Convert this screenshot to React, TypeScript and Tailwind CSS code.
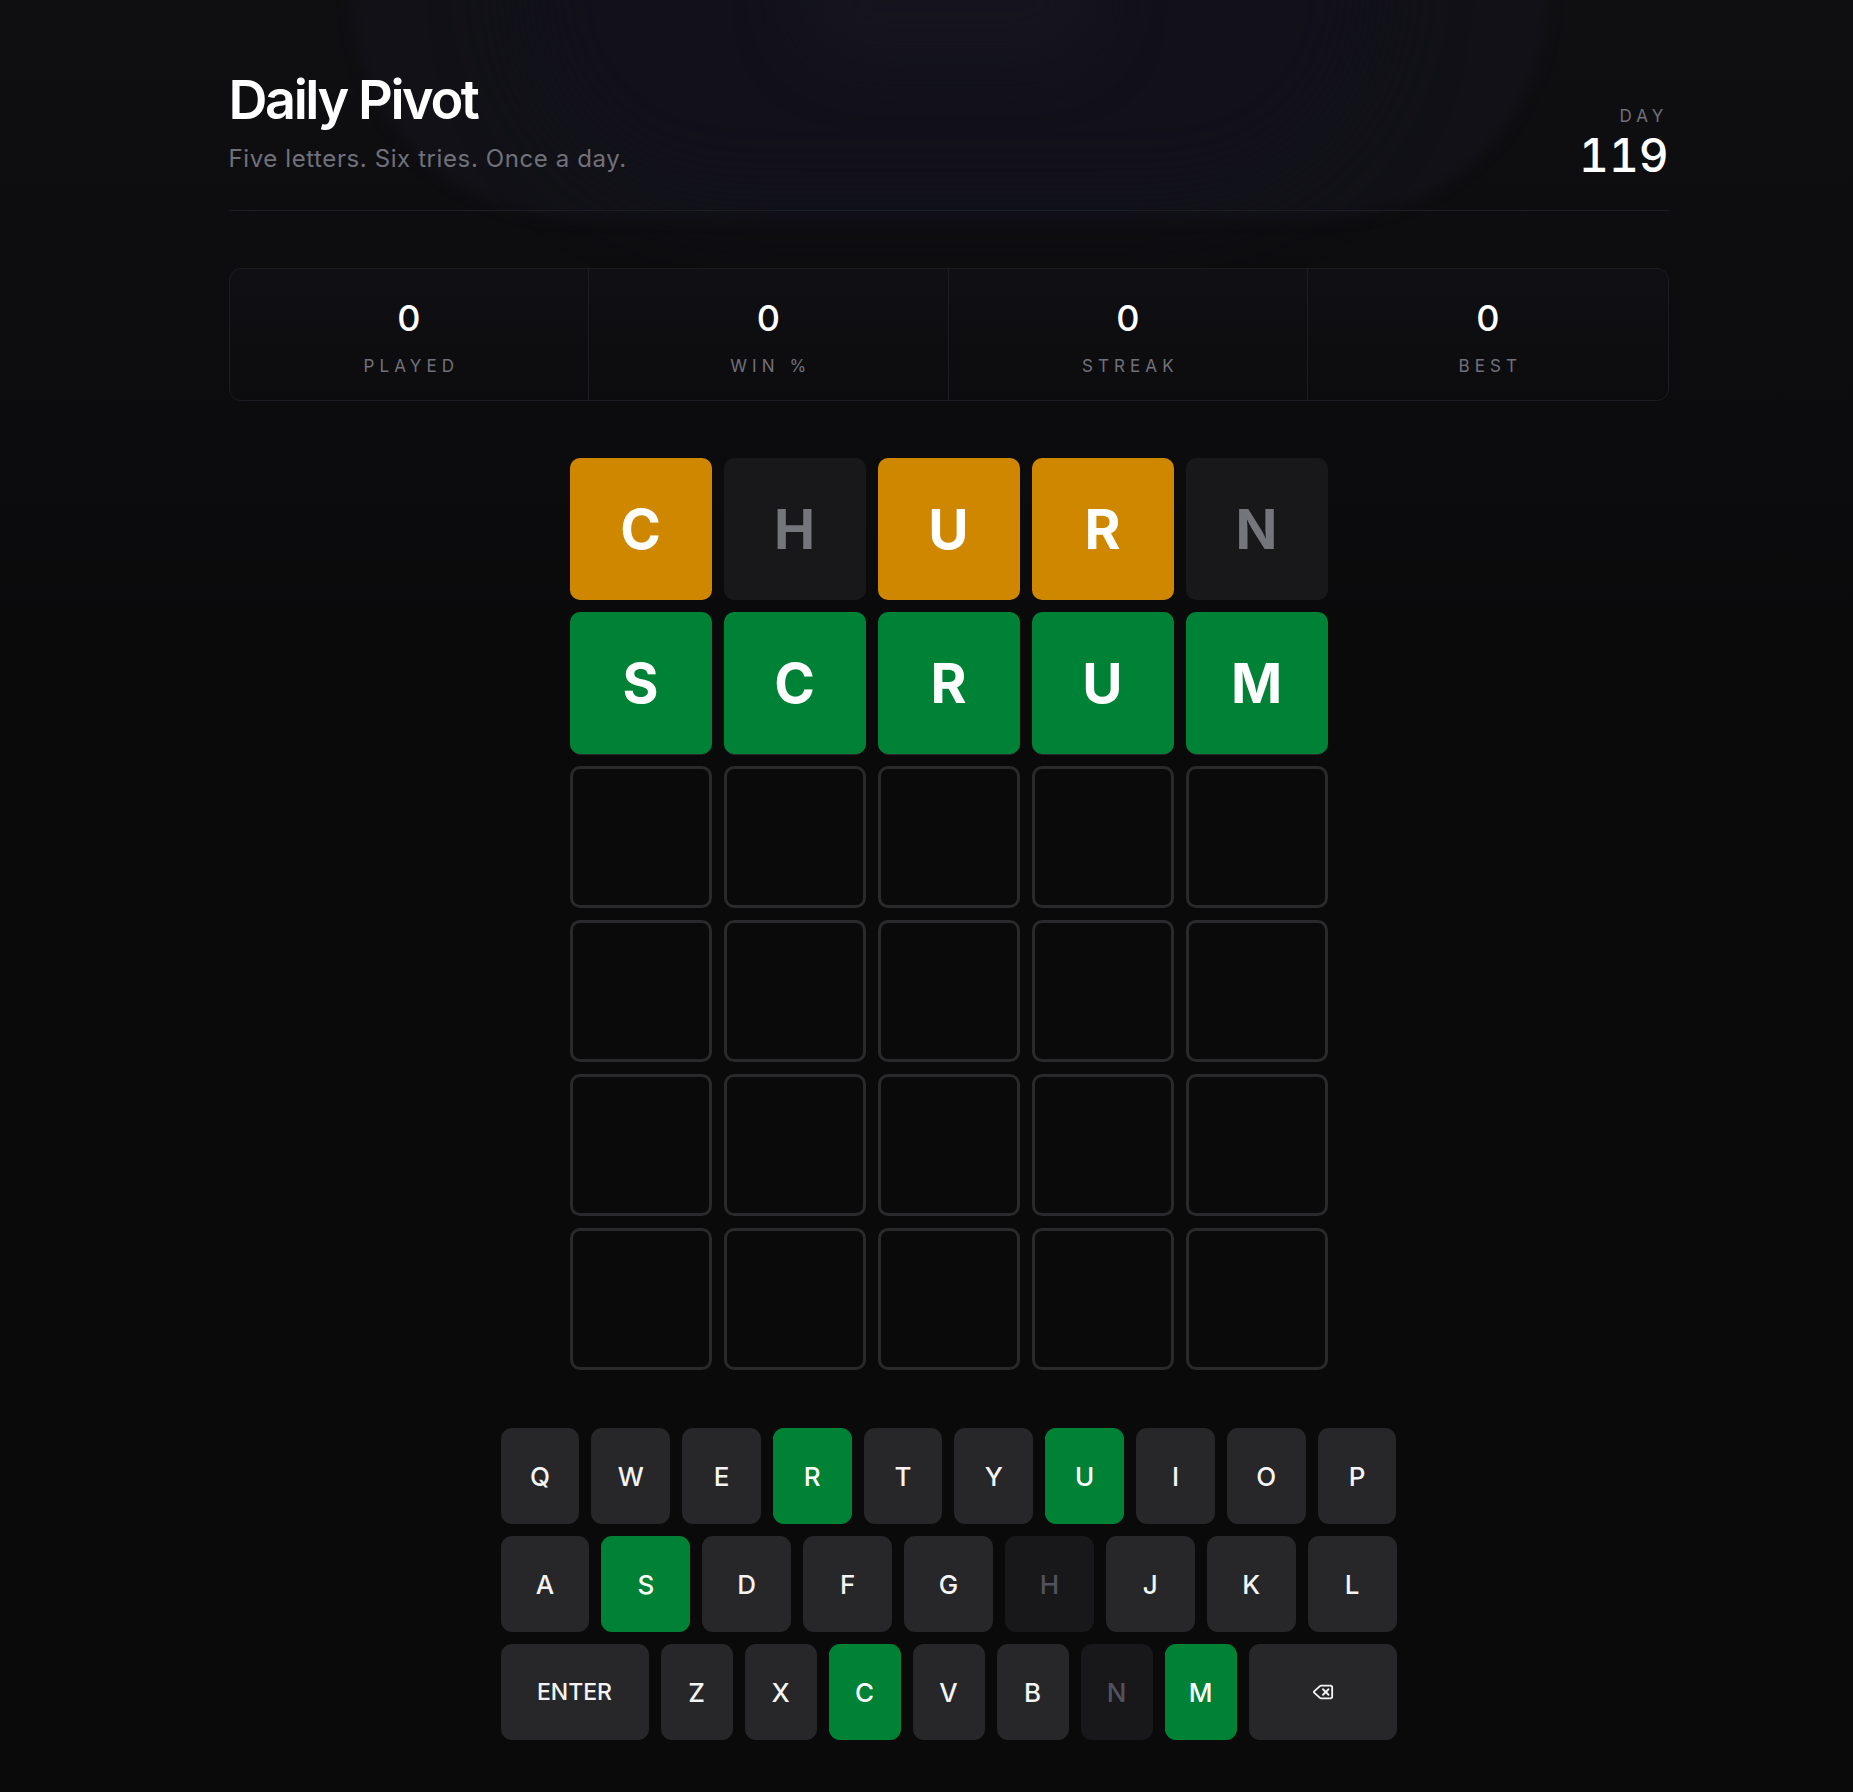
import { Delete } from "lucide-react";

type Mark = "correct" | "present" | "absent" | "empty";

type Cell = { letter: string; mark: Mark };

const guesses: Cell[][] = [
  [
    { letter: "C", mark: "present" },
    { letter: "H", mark: "absent" },
    { letter: "U", mark: "present" },
    { letter: "R", mark: "present" },
    { letter: "N", mark: "absent" },
  ],
  [
    { letter: "S", mark: "correct" },
    { letter: "C", mark: "correct" },
    { letter: "R", mark: "correct" },
    { letter: "U", mark: "correct" },
    { letter: "M", mark: "correct" },
  ],
];

const board: Cell[][] = Array.from({ length: 6 }, (_, r) =>
  guesses[r] ?? Array.from({ length: 5 }, () => ({ letter: "", mark: "empty" as Mark })),
);

const keyMarks: Record<string, Mark> = {
  R: "correct",
  U: "correct",
  S: "correct",
  C: "correct",
  M: "correct",
  H: "absent",
  N: "absent",
};

const keyRows = [
  ["Q", "W", "E", "R", "T", "Y", "U", "I", "O", "P"],
  ["A", "S", "D", "F", "G", "H", "J", "K", "L"],
  ["ENTER", "Z", "X", "C", "V", "B", "N", "M", "BACK"],
];

const stats = [
  { value: 0, label: "Played" },
  { value: 0, label: "Win %" },
  { value: 0, label: "Streak" },
  { value: 0, label: "Best" },
];

const tileStyles: Record<Mark, string> = {
  correct: "bg-green-700 text-white shadow-[0_4px_0_-3px_#2a2a2e]",
  present: "bg-yellow-600 text-white",
  absent: "bg-zinc-900 text-[#74767b]",
  empty: "border-[3px] border-[#2a2a2d] bg-transparent",
};

const keyStyles: Record<Mark, string> = {
  correct: "bg-green-700 text-white",
  present: "bg-yellow-600 text-white",
  absent: "bg-zinc-900 text-zinc-600",
  empty: "bg-zinc-800 text-zinc-100",
};

function Tile({ cell }: { cell: Cell }) {
  return (
    <div
      className={`flex h-[142px] w-[142px] items-center justify-center rounded-[10px] text-[55px] font-bold leading-none ${tileStyles[cell.mark]}`}
    >
      {cell.letter}
    </div>
  );
}

function Key({ label }: { label: string }) {
  const wide = label === "ENTER" || label === "BACK";
  const mark = keyMarks[label] ?? "empty";
  return (
    <button
      type="button"
      className={`flex h-[96px] items-center justify-center rounded-[11px] font-medium ${
        wide ? "w-[148px] shrink-0 text-[23px]" : "flex-1 text-[26px]"
      } ${keyStyles[mark]}`}
    >
      {label === "BACK" ? <Delete size={22} strokeWidth={2} /> : label}
    </button>
  );
}

export default function App() {
  return (
    <div className="relative min-h-screen overflow-hidden bg-[#0a0a0b] font-[Inter,sans-serif] text-zinc-100">
      <div className="pointer-events-none absolute inset-x-0 top-0 h-[700px] bg-gradient-to-b from-[#0f0f12] to-transparent" />
      <div className="pointer-events-none absolute left-[350px] top-[-230px] h-[450px] w-[1200px] rounded-full bg-[#111117] blur-[6px]" />
      <div className="pointer-events-none absolute left-[520px] top-[-220px] h-[420px] w-[860px] rounded-full bg-[#12111a] blur-[40px]" />
      <div className="pointer-events-none absolute left-[800px] top-[-60px] h-[120px] w-[300px] rounded-full bg-[#16151e] blur-[30px]" />

      <div className="relative pl-[44px]">
        <div className="mx-auto w-[1440px] pt-[73px]">
          <header className="flex items-end justify-between border-b border-[#1d1d25] pb-[35px]">
            <div>
              <h1 className="text-[54px] font-semibold leading-none tracking-[-0.045em] text-white">Daily Pivot</h1>
              <p className="mt-4 text-2xl leading-8 tracking-wide text-zinc-500">Five letters. Six tries. Once a day.</p>
            </div>
            <div className="text-right">
              <div className="mb-[7px] text-[17px] uppercase leading-6 tracking-[0.3em] text-zinc-500">Day</div>
              <div className="text-[46px] font-medium leading-[40px] tabular-nums text-white">119</div>
            </div>
          </header>

          <section className="mt-[57px] grid grid-cols-4 divide-x divide-[#1c1c22] rounded-xl border border-[#1c1c22] bg-gradient-to-b from-[#101014] to-[#0c0c0e]">
            {stats.map((stat) => (
              <div key={stat.label} className="flex flex-col items-center pb-[22px] pt-[31px]">
                <span className="text-[36px] font-medium leading-none text-white">{stat.value}</span>
                <span className="mt-[18px] pl-[0.3em] text-[17px] uppercase leading-6 tracking-[0.3em] text-zinc-500">
                  {stat.label}
                </span>
              </div>
            ))}
          </section>

          <main className="mt-[57px] flex flex-col items-center gap-3">
            {board.map((row, r) => (
              <div key={r} className="flex gap-3">
                {row.map((cell, c) => (
                  <Tile key={c} cell={cell} />
                ))}
              </div>
            ))}
          </main>

          <div className="mx-auto mt-[58px] flex w-[896px] flex-col gap-3">
            {keyRows.map((row, r) => (
              <div key={r} className="flex gap-3">
                {row.map((k) => (
                  <Key key={k} label={k} />
                ))}
              </div>
            ))}
          </div>
        </div>
      </div>
    </div>
  );
}
